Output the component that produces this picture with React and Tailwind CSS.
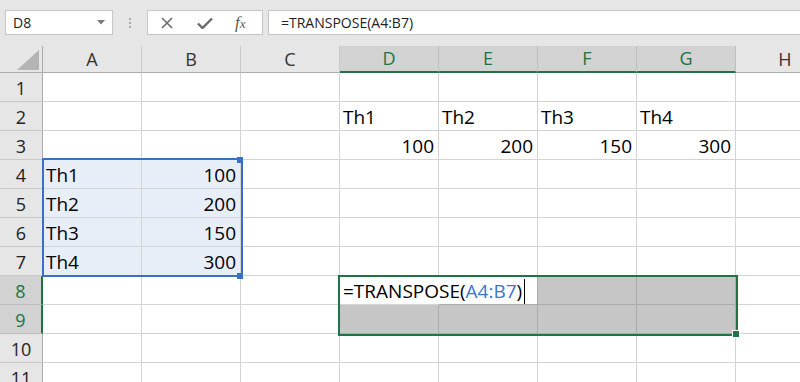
import React from 'react';

const COLS = ['A', 'B', 'C', 'D', 'E', 'F', 'G', 'H'];
const SELECTED_COLS = ['D', 'E', 'F', 'G'];

// cell contents keyed by ref
const data = {
  D2: 'Th1', E2: 'Th2', F2: 'Th3', G2: 'Th4',
  D3: 100, E3: 200, F3: 150, G3: 300,
  A4: 'Th1', B4: 100,
  A5: 'Th2', B5: 200,
  A6: 'Th3', B6: 150,
  A7: 'Th4', B7: 300,
};

function cellTone(col, row) {
  if ((col === 'A' || col === 'B') && row >= 4 && row <= 7) return 'bg-[#e8eef8] border-[#d4d4d4]';
  if (SELECTED_COLS.includes(col) && (row === 8 || row === 9) && !(col === 'D' && row === 8)) {
    return 'bg-[#c6c6c6] border-[#ababab]';
  }
  return 'bg-white border-[#d4d4d4]';
}

function FormulaBar() {
  return (
    <div className="h-[46px] bg-[#e6e6e6] flex items-start pt-[10px] pl-[5px] gap-0 font-['Open_Sans',sans-serif]">
      <div className="w-[108px] h-[25px] bg-white border border-[#c6c6c6] flex items-center justify-between pl-[7px] pr-[7px]">
        <span className="text-[14px] text-[#222]">D8</span>
        <svg width="8" height="5" viewBox="0 0 8 5"><path d="M0 0h8L4 4.5z" fill="#7a7a7a" /></svg>
      </div>
      <div className="w-[34px] h-[25px] flex flex-col items-center justify-center gap-[2px]">
        <span className="w-[2px] h-[2px] bg-[#a8a8a8]" />
        <span className="w-[2px] h-[2px] bg-[#a8a8a8]" />
        <span className="w-[2px] h-[2px] bg-[#a8a8a8]" />
      </div>
      <div className="w-[116px] h-[25px] bg-white border border-[#c6c6c6] flex items-center">
        <svg className="ml-[13px]" width="12" height="12" viewBox="0 0 12 12">
          <path d="M1 1L11 11M11 1L1 11" stroke="#6a6a6a" strokeWidth="1.6" />
        </svg>
        <svg className="ml-[24px]" width="16" height="12" viewBox="0 0 16 12">
          <path d="M1 6.5L5.5 11L15 1.5" stroke="#6a6a6a" strokeWidth="2.4" fill="none" />
        </svg>
        <span className="ml-[22px] text-[17px] italic text-[#5a5a5a] font-['Liberation_Serif',serif] leading-none">
          f<span className="text-[13px]">x</span>
        </span>
      </div>
      <div className="ml-[5px] flex-1 h-[25px] bg-white border border-[#c6c6c6] border-r-0 flex items-center pl-[12px]">
        <span className="text-[14px] text-[#222]">=TRANSPOSE(A4:B7)</span>
      </div>
    </div>
  );
}

function Sheet() {
  const rows = Array.from({ length: 11 }, (_, i) => i + 1);
  return (
    <div className="relative overflow-hidden">
      <div className="grid grid-cols-[43px_repeat(8,99px)] grid-rows-[27px_repeat(11,29px)] w-[835px] font-['Open_Sans',sans-serif]">
        {/* corner */}
        <div className="bg-[#e6e6e6] border-r border-b border-[#ababab] flex items-end justify-end pr-[3px] pb-[2px]">
          <svg width="22" height="20" viewBox="0 0 22 20"><path d="M22 0V20H0z" fill="#b4b4b4" /></svg>
        </div>
        {COLS.map(c => {
          const sel = SELECTED_COLS.includes(c);
          return (
            <div
              key={c}
              className={
                sel
                  ? 'bg-[#d2d2d2] border-r border-r-[#bdbdbd] border-b-2 border-b-[#217346] text-[#217346] flex items-center justify-center text-[18px]'
                  : 'bg-[#e6e6e6] border-r border-r-[#c8c8c8] border-b border-b-[#ababab] text-[#333] flex items-center justify-center text-[18px]'
              }
            >
              {c}
            </div>
          );
        })}
        {rows.map(r => (
          <React.Fragment key={r}>
            <div
              className={
                r === 8 || r === 9
                  ? 'bg-[#d2d2d2] border-r-2 border-r-[#217346] border-b border-b-[#bdbdbd] text-[#217346] flex items-center justify-center text-[18px] pt-[2px]'
                  : 'bg-[#e6e6e6] border-r border-r-[#ababab] border-b border-b-[#c8c8c8] text-[#222] flex items-center justify-center text-[18px] pt-[2px]'
              }
            >
              {r}
            </div>
            {COLS.map(c => {
              const v = data[c + r];
              const num = typeof v === 'number';
              return (
                <div
                  key={c + r}
                  className={`border-r border-b ${cellTone(c, r)} flex items-center pt-[3px] whitespace-nowrap text-[19px] text-black ${num ? 'justify-end pr-[4px]' : 'pl-[3px]'}`}
                >
                  {v}
                </div>
              );
            })}
          </React.Fragment>
        ))}
      </div>

      {/* A4:B7 selection */}
      <div className="absolute left-[42px] top-[112px] w-[201px] h-[119px] border-2 border-[#3a6fc6]" />
      <div className="absolute left-[237px] top-[111px] w-[6px] h-[6px] bg-[#3a6fc6]" />
      <div className="absolute left-[237px] top-[227px] w-[6px] h-[6px] bg-[#3a6fc6]" />

      {/* D8:G9 selection with in-cell editor */}
      <div className="absolute left-[340px] top-[230px] w-[197px] h-[28px] bg-white flex items-center pl-[3px] pt-[3px] whitespace-nowrap font-['Open_Sans',sans-serif] text-[19px] text-black">
        <span>=TRANSPOSE(</span>
        <span className="text-[#3c74d4]">A4:B7</span>
        <span>)</span>
        <span className="ml-[2px] w-[1px] h-[25px] bg-black" />
      </div>
      <div className="absolute left-[338px] top-[229px] w-[400px] h-[61px] border-2 border-[#217346]" />
      <div className="absolute left-[733px] top-[285px] w-[6px] h-[6px] bg-[#217346] outline outline-1 outline-white" />
    </div>
  );
}

export default function App() {
  return (
    <div className="w-[800px] h-[382px] overflow-hidden bg-white">
      <FormulaBar />
      <Sheet />
    </div>
  );
}
